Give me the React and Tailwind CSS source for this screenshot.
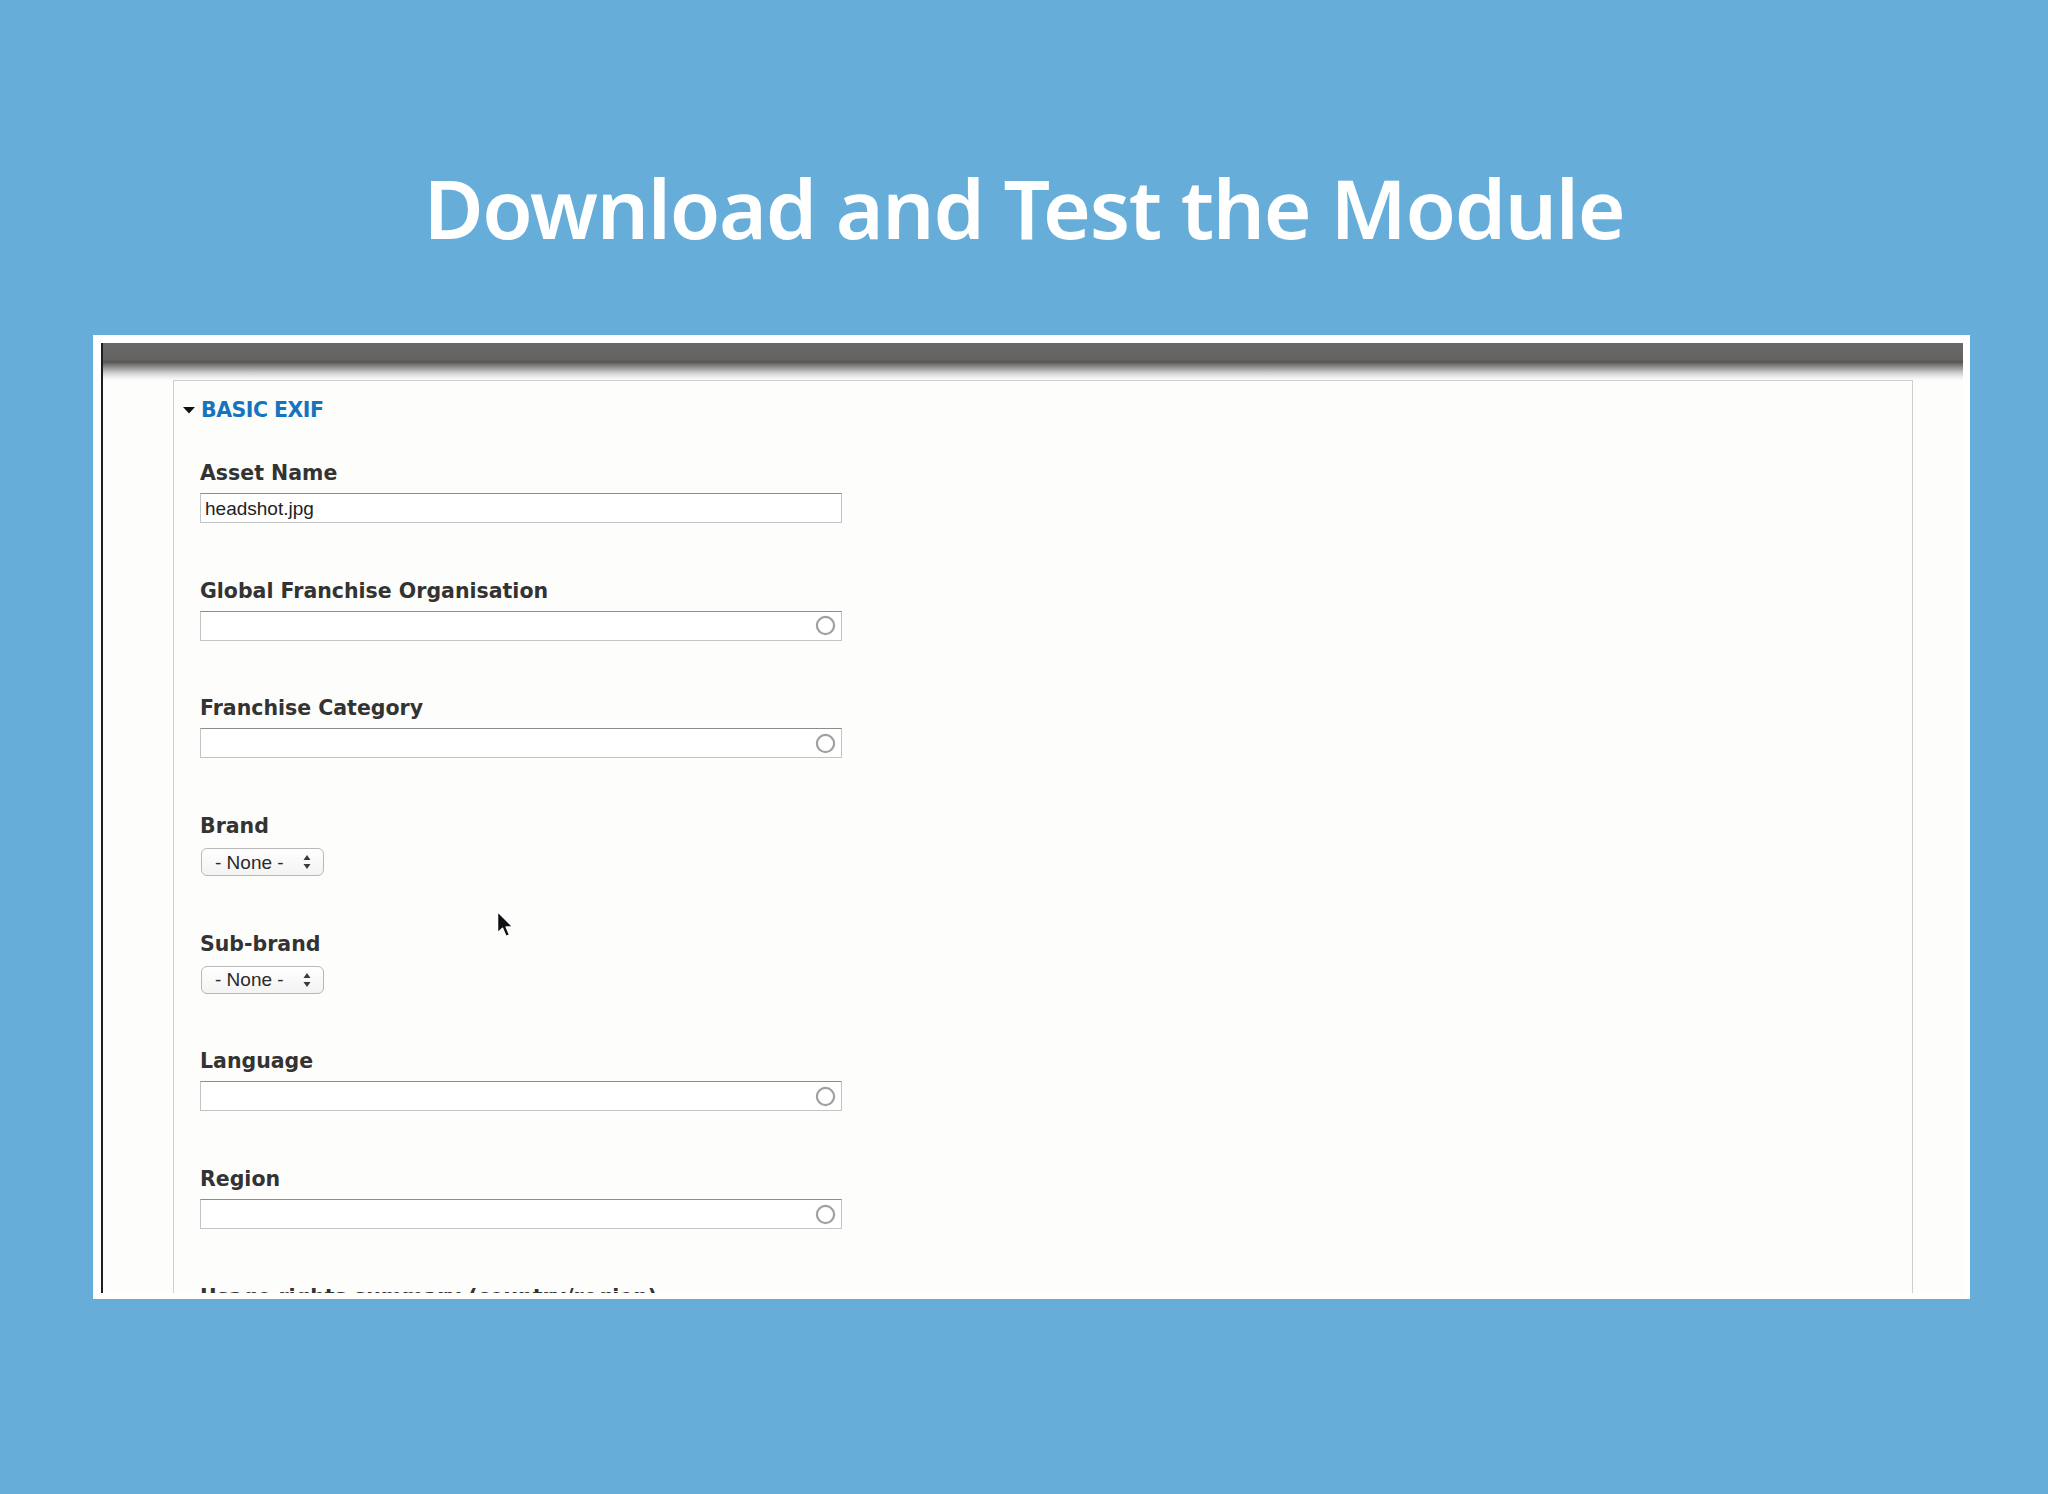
import React from "react";

function Circle() {
  return (
    <svg width="21" height="21" viewBox="0 0 21 21">
      <circle cx="10.5" cy="10.5" r="8.6" fill="none" stroke="#a0a0a0" strokeWidth="2.2" />
    </svg>
  );
}

function Arrows() {
  return (
    <svg width="8" height="16" viewBox="0 0 8 16">
      <polygon points="4,1 7.5,6 0.5,6" fill="#3a3a3a" />
      <polygon points="0.5,10 7.5,10 4,15" fill="#3a3a3a" />
    </svg>
  );
}

const labelCls =
  "h-[24px] leading-[24px] text-[20.5px] font-bold text-[#333333] font-['DejaVu_Sans',sans-serif] whitespace-nowrap";

function TextField({ label, value, lookup }) {
  return (
    <div className="h-[117.7px] flex flex-col">
      <div className={labelCls}>{label}</div>
      <div className="mt-[8px] h-[30px] w-[642px] shrink-0 bg-white border border-[#c4c4c4] border-t-[#8c8c8c] flex items-center pl-[4px] pr-[5px] justify-between">
        <span className="text-[19px] text-[#222222] font-['Liberation_Sans',Arial,sans-serif] leading-none">
          {value}
        </span>
        {lookup ? <Circle /> : null}
      </div>
    </div>
  );
}

function SelectField({ label }) {
  return (
    <div className="h-[117.7px] flex flex-col">
      <div className={labelCls}>{label}</div>
      <div className="mt-[10px] ml-[1px] h-[28px] w-[123px] shrink-0 rounded-[6px] border border-[#b8b8b8] bg-[linear-gradient(to_bottom,#ffffff,#f3f3f3)] flex items-center justify-between pl-[13px] pr-[12px]">
        <span className="text-[19px] text-[#2a2a2a] font-['Liberation_Sans',Arial,sans-serif] leading-none">
          - None -
        </span>
        <Arrows />
      </div>
    </div>
  );
}

export default function App() {
  return (
    <div className="relative w-[2048px] h-[1494px] bg-[#66aed9] overflow-hidden">
      <div className="pt-[166px] text-center leading-none text-[82px] tracking-[-1.3px] font-semibold text-white font-['Noto_Sans',sans-serif]">
        Download and Test the Module
      </div>

      <div className="mt-[87px] ml-[93px] w-[1877px] h-[964px] bg-white pt-[8px] pl-[8px] pr-[7px] pb-[6px]">
        <div className="h-full flex flex-col border-l-2 border-[#1e1e1e] overflow-hidden bg-[#fdfdfb]">
          <div className="h-[37px] shrink-0 bg-[linear-gradient(to_bottom,#6b6967_0px,#656361_16px,#585654_19px,#8e8d8c_24px,#cfcfcf_30px,#f3f3f3_35px,#fbfbfb_37px)]" />
          <div className="flex flex-1 min-h-0">
            <div className="w-[70px] shrink-0" />
            <div className="w-[1740px] shrink-0 border-l border-r border-t border-[#cfcfcf] bg-[#fdfdfb] pt-[17px] pl-[9px]">
              <div className="flex items-center h-[24px] gap-[6px]">
                <svg width="12" height="7" viewBox="0 0 12 7">
                  <polygon points="0,0 12,0 6,6.5" fill="#111111" />
                </svg>
                <span className="text-[20.5px] leading-[24px] font-bold tracking-[-0.5px] text-[#1474bd] font-['DejaVu_Sans',sans-serif]">
                  BASIC EXIF
                </span>
              </div>
              <div className="mt-[39px] pl-[17px]">
                <TextField label="Asset Name" value="headshot.jpg" />
                <TextField label="Global Franchise Organisation" lookup />
                <TextField label="Franchise Category" lookup />
                <SelectField label="Brand" />
                <SelectField label="Sub-brand" />
                <TextField label="Language" lookup />
                <TextField label="Region" lookup />
                <div className={labelCls}>Usage rights summary (country/region)</div>
              </div>
            </div>
            <div className="flex-1" />
          </div>
        </div>
      </div>

      <svg
        className="absolute left-[496px] top-[910px]"
        width="19"
        height="29"
        viewBox="0 0 19 29"
      >
        <path
          d="M1.5 1.5 L1.5 23 L6.5 18.2 L10 26.5 L13.6 25 L10.2 17 L17 17 Z"
          fill="#111111"
          stroke="#ffffff"
          strokeWidth="1.5"
          strokeLinejoin="round"
        />
      </svg>
    </div>
  );
}
